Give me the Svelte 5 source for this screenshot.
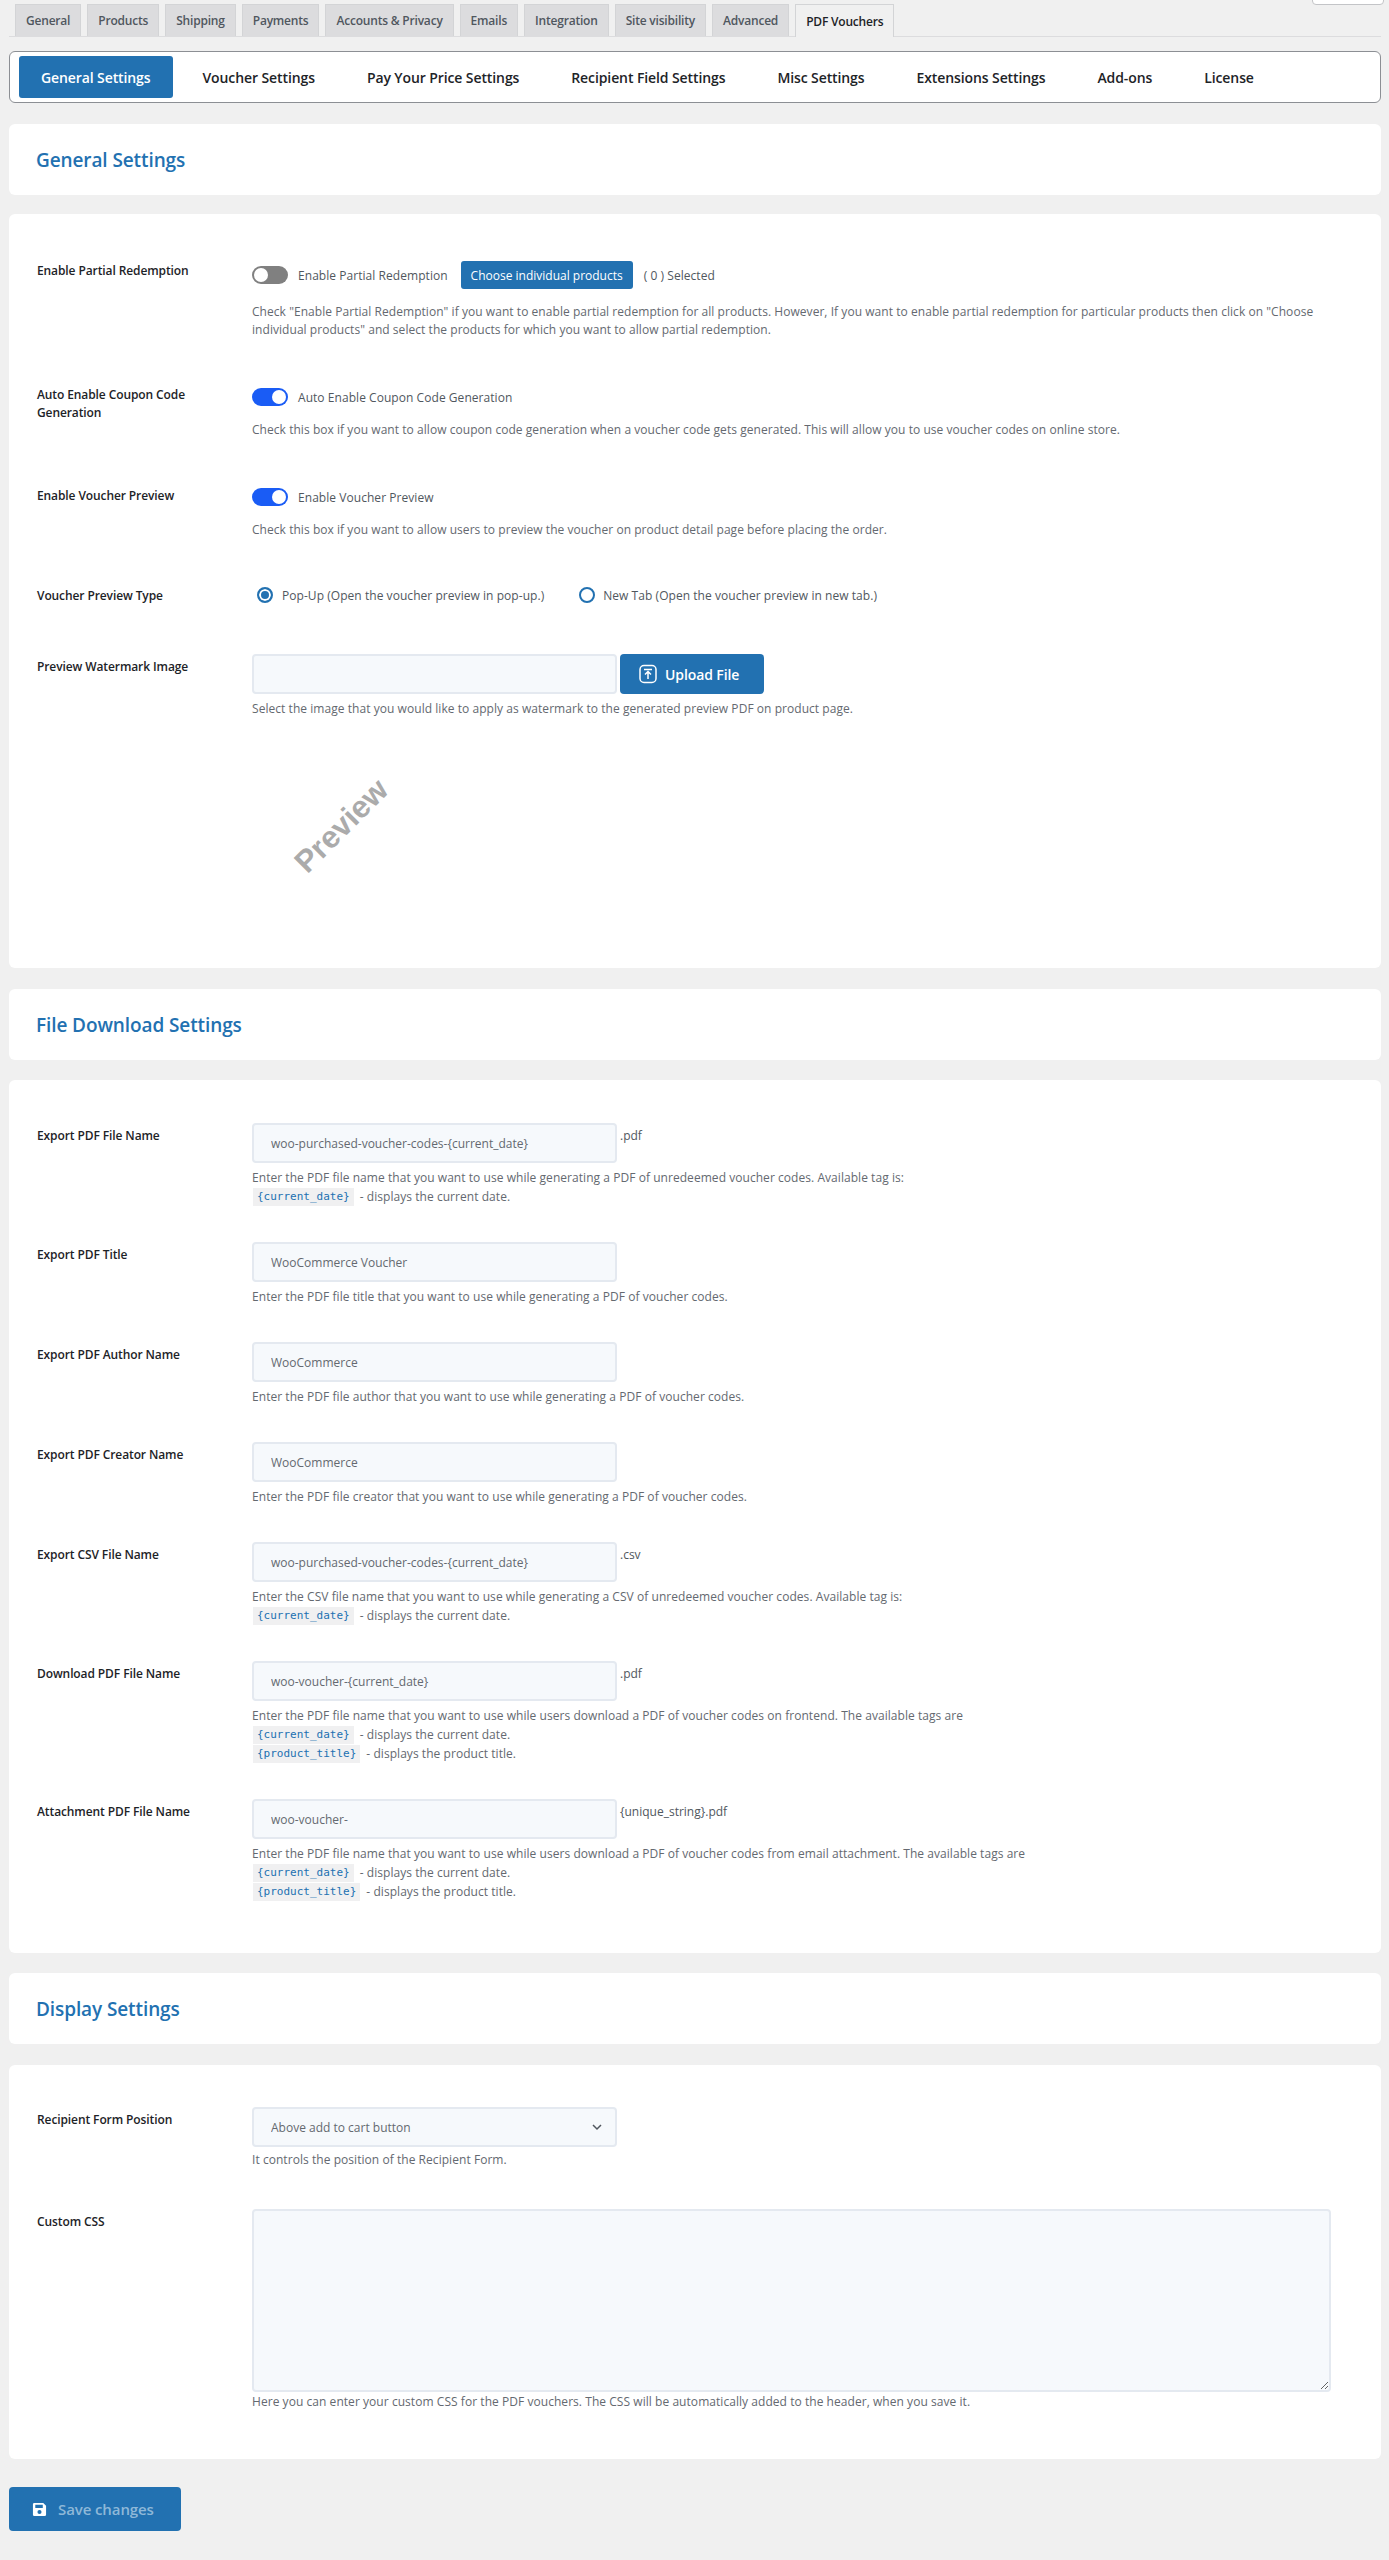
<script lang="ts">
	// Top level WooCommerce tabs
	const tabs = ['General', 'Products', 'Shipping', 'Payments', 'Accounts & Privacy', 'Emails', 'Integration', 'Site visibility', 'Advanced', 'PDF Vouchers'];

	// Plugin sub navigation
	const subTabs = ['General Settings', 'Voucher Settings', 'Pay Your Price Settings', 'Recipient Field Settings', 'Misc Settings', 'Extensions Settings', 'Add-ons', 'License'];

	const dateTag = { tag: '{current_date}', text: '- displays the current date.' };
	const titleTag = { tag: '{product_title}', text: '- displays the product title.' };

	// Rows of the file download card
	const fileRows = [
		{ label: 'Export PDF File Name', value: 'woo-purchased-voucher-codes-{current_date}', suffix: '.pdf', desc: 'Enter the PDF file name that you want to use while generating a PDF of unredeemed voucher codes. Available tag is:', tags: [dateTag] },
		{ label: 'Export PDF Title', value: 'WooCommerce Voucher', suffix: '', desc: 'Enter the PDF file title that you want to use while generating a PDF of voucher codes.', tags: [] },
		{ label: 'Export PDF Author Name', value: 'WooCommerce', suffix: '', desc: 'Enter the PDF file author that you want to use while generating a PDF of voucher codes.', tags: [] },
		{ label: 'Export PDF Creator Name', value: 'WooCommerce', suffix: '', desc: 'Enter the PDF file creator that you want to use while generating a PDF of voucher codes.', tags: [] },
		{ label: 'Export CSV File Name', value: 'woo-purchased-voucher-codes-{current_date}', suffix: '.csv', desc: 'Enter the CSV file name that you want to use while generating a CSV of unredeemed voucher codes. Available tag is:', tags: [dateTag] },
		{ label: 'Download PDF File Name', value: 'woo-voucher-{current_date}', suffix: '.pdf', desc: 'Enter the PDF file name that you want to use while users download a PDF of voucher codes on frontend. The available tags are', tags: [dateTag, titleTag] },
		{ label: 'Attachment PDF File Name', value: 'woo-voucher-', suffix: '{unique_string}.pdf', desc: 'Enter the PDF file name that you want to use while users download a PDF of voucher codes from email attachment. The available tags are', tags: [dateTag, titleTag] }
	];
</script>

<div class="wrap">
	<div class="screen-options"></div>

	<nav class="tabs">
		{#each tabs as tab, i}
			<span class="tab" class:active={i === tabs.length - 1}>{tab}</span>
		{/each}
	</nav>

	<nav class="subnav">
		{#each subTabs as item, i}
			<span class="subitem" class:current={i === 0}>{item}</span>
		{/each}
	</nav>

	<section class="card head"><h2>General Settings</h2></section>

	<section class="card body general">
		<div class="row first">
			<div class="label">Enable Partial Redemption</div>
			<div class="field">
				<div class="line">
					<span class="toggle"></span>
					<span class="opt">Enable Partial Redemption</span>
					<button class="choose">Choose individual products</button>
					<span class="opt selected">( 0 ) Selected</span>
				</div>
				<p class="desc partial">Check "Enable Partial Redemption" if you want to enable partial redemption for all products. However, If you want to enable partial redemption for particular products then click on "Choose individual products" and select the products for which you want to allow partial redemption.</p>
			</div>
		</div>

		<div class="row auto">
			<div class="label">Auto Enable Coupon Code Generation</div>
			<div class="field">
				<div class="line">
					<span class="toggle on"></span>
					<span class="opt">Auto Enable Coupon Code Generation</span>
				</div>
				<p class="desc after-toggle">Check this box if you want to allow coupon code generation when a voucher code gets generated. This will allow you to use voucher codes on online store.</p>
			</div>
		</div>

		<div class="row preview-row">
			<div class="label">Enable Voucher Preview</div>
			<div class="field">
				<div class="line">
					<span class="toggle on"></span>
					<span class="opt">Enable Voucher Preview</span>
				</div>
				<p class="desc after-toggle">Check this box if you want to allow users to preview the voucher on product detail page before placing the order.</p>
			</div>
		</div>

		<div class="row type-row">
			<div class="label">Voucher Preview Type</div>
			<div class="field radios">
				<span class="radio checked"></span>
				<span class="opt">Pop-Up (Open the voucher preview in pop-up.)</span>
				<span class="radio second"></span>
				<span class="opt">New Tab (Open the voucher preview in new tab.)</span>
			</div>
		</div>

		<div class="row watermark">
			<div class="label">Preview Watermark Image</div>
			<div class="field">
				<div class="upload-line">
					<input class="text" type="text" />
					<button class="upload">
						<svg width="20" height="20" viewBox="0 0 20 20" fill="none" stroke="#fff" stroke-width="1.5">
							<rect x="2" y="1.5" width="16" height="17" rx="4" />
							<path d="M6 5.5h8M10 15V8M7 10.5 10 7.5l3 3" />
						</svg>
						Upload File
					</button>
				</div>
				<p class="desc input-desc">Select the image that you would like to apply as watermark to the generated preview PDF on product page.</p>
				<div class="watermark-img"><span>Preview</span></div>
			</div>
		</div>
	</section>

	<section class="card head"><h2>File Download Settings</h2></section>

	<section class="card body files">
		{#each fileRows as row}
			<div class="row file">
				<div class="label">{row.label}</div>
				<div class="field">
					<div class="input-line">
						<input class="text" type="text" value={row.value} />
						{#if row.suffix}<span class="suffix">{row.suffix}</span>{/if}
					</div>
					<p class="desc input-desc">{row.desc}</p>
					{#each row.tags as t}
						<div class="tag-line"><code>{t.tag}</code><span>{t.text}</span></div>
					{/each}
				</div>
			</div>
		{/each}
	</section>

	<section class="card head display-head"><h2>Display Settings</h2></section>

	<section class="card body display">
		<div class="row recipient">
			<div class="label">Recipient Form Position</div>
			<div class="field">
				<div class="select-wrap">
					<select class="text">
						<option>Above add to cart button</option>
					</select>
					<svg class="chevron" width="12" height="8" viewBox="0 0 12 8" fill="none" stroke="#50575e" stroke-width="1.5"><path d="M2 2l4 4 4-4" /></svg>
				</div>
				<p class="desc recipient-desc">It controls the position of the Recipient Form.</p>
			</div>
		</div>
		<div class="row css-row">
			<div class="label">Custom CSS</div>
			<div class="field">
				<textarea class="text css"></textarea>
				<p class="desc css-desc">Here you can enter your custom CSS for the PDF vouchers. The CSS will be automatically added to the header, when you save it.</p>
			</div>
		</div>
	</section>

	<button class="save">
		<svg width="15" height="15" viewBox="0 0 16 16"><path fill="#fff" fill-rule="evenodd" d="M2 1h10l3 3v9.500A1.500 1.500 0 0 1 13.500 15h-11A1.500 1.500 0 0 1 1 13.500v-11A1.500 1.500 0 0 1 2 1zm1.500 2v3.500h8V3zM8 8.500a2.200 2.200 0 1 0 0 4.400 2.200 2.200 0 0 0 0-4.400z" /></svg>
		Save changes
	</button>
</div>

<style>
	:global(body) {
		background: #f0f0f0;
		font-family: 'Open Sans', 'Noto Sans', sans-serif;
		font-size: 12px;
		color: #3c434a;
	}

	.wrap {
		position: relative;
		height: 2560px;
		box-sizing: border-box;
		padding: 4px 8px 0 9px;
		overflow: hidden;
	}

	.screen-options {
		position: absolute;
		top: -20px;
		left: 1312px;
		width: 70px;
		height: 23px;
		background: #fff;
		border: 1px solid #c3c4c7;
		border-radius: 4px;
	}

	.tabs {
		display: flex;
		gap: 6px;
		padding-left: 6px;
		height: 32px;
		border-bottom: 1px solid #dcdcde;
	}

	.tab {
		display: flex;
		align-items: center;
		justify-content: center;
		box-sizing: border-box;
		height: 32px;
		padding: 0 10px;
		background: #dcdcde;
		border: 1px solid #d3d4d6;
		border-bottom: 0;
		color: #50575e;
		font-size: 12px;
		font-weight: 600;
		letter-spacing: -0.2px;
	}

	.tab.active {
		background: #f0f0f0;
		color: #1d2327;
		height: 33px;
	}

	.subnav {
		display: flex;
		align-items: center;
		gap: 8px;
		box-sizing: border-box;
		height: 52px;
		margin-top: 14px;
		padding: 0 9px;
		background: #fff;
		border: 1px solid #8c8f94;
		border-radius: 6px;
	}

	.subitem {
		display: flex;
		align-items: center;
		height: 42px;
		padding: 0 22px;
		font-size: 14px;
		font-weight: 600;
		letter-spacing: -0.1px;
		color: #1d2327;
		border-radius: 3px;
	}

	.subitem.current {
		background: #2271b1;
		color: #fff;
	}

	.card {
		background: #fff;
		border-radius: 6px;
	}

	.head {
		display: flex;
		align-items: center;
		height: 71px;
		padding-left: 27px;
		margin-top: 21px;
	}

	.display-head {
		margin-top: 20px;
	}

	.head + .body {
		margin-top: 19px;
	}

	h2 {
		margin: 0;
		font-size: 19px;
		font-weight: 600;
		letter-spacing: -0.1px;
		color: #2271b1;
	}

	.body {
		padding: 0 28px;
		overflow: hidden;
	}

	.general {
		height: 754px;
	}

	.row {
		display: flex;
	}

	.label {
		width: 215px;
		box-sizing: border-box;
		padding-right: 40px;
		flex: none;
		font-weight: 600;
		font-size: 12px;
		letter-spacing: -0.1px;
		line-height: 18px;
		color: #1d2327;
	}

	.field {
		flex: 1;
		min-width: 0;
	}

	.line {
		display: flex;
		align-items: center;
		height: 28px;
	}

	.opt {
		letter-spacing: 0.05px;
		color: #50575e;
	}

	.toggle {
		position: relative;
		flex: none;
		width: 36px;
		height: 18px;
		margin-right: 10px;
		border-radius: 9px;
		background: #808080;
	}

	.toggle::after {
		content: '';
		position: absolute;
		top: 2px;
		left: 2px;
		width: 14px;
		height: 14px;
		border-radius: 50%;
		background: #fff;
	}

	.toggle.on {
		background: #1a5cf5;
	}

	.toggle.on::after {
		left: 20px;
	}

	.choose {
		margin: 0 11px 0 13px;
		height: 28px;
		width: 172px;
		padding: 0;
		border: 0;
		border-radius: 3px;
		background: #2271b1;
		color: #fff;
		font: inherit;
	}

	.desc {
		margin: 0;
		font-size: 12px;
		letter-spacing: 0.05px;
		line-height: 18px;
		color: #646970;
	}

	.partial {
		margin-top: 14px;
	}

	.after-toggle {
		margin-top: 15px;
	}

	.first {
		padding-top: 47px;
	}

	.first .label {
		margin-top: 1px;
	}

	.auto {
		padding-top: 49px;
	}

	.preview-row {
		padding-top: 49px;
	}

	.auto .label {
		margin-top: -2px;
	}

	.preview-row .label {
		margin-top: -1px;
	}

	.auto .line,
	.preview-row .line {
		height: 18px;
	}

	.type-row {
		padding-top: 47px;
	}

	.type-row .label {
		margin-top: 1px;
	}

	.radios {
		display: flex;
		align-items: center;
		height: 18px;
	}

	.radio {
		box-sizing: border-box;
		width: 16px;
		height: 16px;
		margin: 0 9px 0 5px;
		border: 2px solid #2271b1;
		border-radius: 50%;
		background: #fff;
	}

	.radio.checked {
		background: #2271b1;
		box-shadow: inset 0 0 0 2px #fff;
	}

	.radio.second {
		margin: 0 8px 0 35px;
	}

	.watermark {
		padding-top: 49px;
	}

	.watermark .label {
		margin-top: 4px;
	}

	.upload-line {
		display: flex;
		gap: 3px;
	}

	.text {
		box-sizing: border-box;
		width: 365px;
		height: 40px;
		padding: 0 17px;
		background: #f6f9fc;
		border: 2px solid #e4e9f0;
		border-radius: 4px;
		font: inherit;
		color: #646970;
		outline: none;
	}

	.upload {
		display: flex;
		align-items: center;
		gap: 7px;
		width: 144px;
		height: 40px;
		padding: 0 0 0 18px;
		border: 0;
		border-radius: 4px;
		background: #2271b1;
		color: #fff;
		font: inherit;
		font-size: 14px;
		font-weight: 600;
		letter-spacing: -0.1px;
	}

	.input-desc {
		margin-top: 6px;
	}

	.watermark-img {
		position: relative;
		height: 180px;
	}

	.watermark-img span {
		position: absolute;
		top: 90px;
		left: 31px;
		font-family: 'Liberation Sans', sans-serif;
		font-size: 31px;
		font-weight: 700;
		color: #ababab;
		transform: rotate(-45deg);
	}

	.files {
		padding-top: 43px;
		box-sizing: border-box;
		height: 873px;
		margin-top: 20px !important;
	}

	.file {
		padding-bottom: 36px;
	}

	.file .label {
		padding-top: 4px;
	}

	.input-line {
		display: flex;
	}

	.suffix {
		margin: 4px 0 0 3px;
		color: #50575e;
	}

	.tag-line {
		display: flex;
		align-items: center;
		height: 19px;
		color: #646970;
		letter-spacing: 0.05px;
	}

	code {
		margin: 0 6px 0 1px;
		padding: 0 4px;
		background: #f0f0f1;
		color: #2271b1;
		font-family: 'DejaVu Sans Mono', 'Liberation Mono', monospace;
		font-size: 11px;
		letter-spacing: 0;
		line-height: 18px;
	}

	.display {
		box-sizing: border-box;
		height: 394px;
		padding-top: 42px;
		margin-top: 21px !important;
	}

	.recipient .label,
	.css-row .label {
		padding-top: 4px;
	}

	.recipient-desc {
		margin-top: 4px;
	}

	.select-wrap {
		position: relative;
		width: 365px;
	}

	select {
		appearance: none;
		display: block;
	}

	.chevron {
		position: absolute;
		top: 16px;
		right: 14px;
	}

	.css-row {
		padding-top: 40px;
	}

	.css {
		display: block;
		width: 1079px;
		height: 183px;
	}

	.css-desc {
		margin-top: 1px;
	}

	.save {
		display: flex;
		align-items: center;
		gap: 11px;
		width: 172px;
		height: 44px;
		margin-top: 28px;
		padding: 0 0 0 23px;
		border: 0;
		border-radius: 4px;
		background: #2271b1;
		color: #8eb8d8;
		font: inherit;
		font-size: 15px;
		font-weight: 600;
		letter-spacing: -0.1px;
	}
</style>
